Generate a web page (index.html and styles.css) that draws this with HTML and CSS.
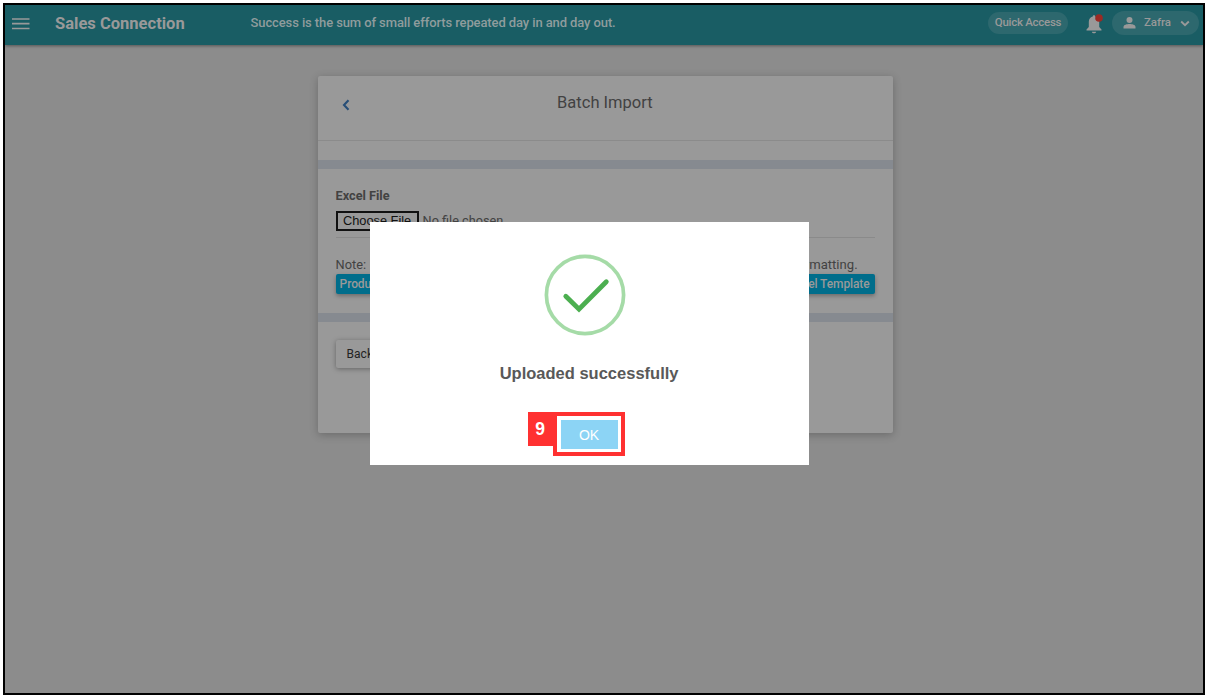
FILE: index.html
```
<!DOCTYPE html>
<html lang="en">
<head>
<meta charset="utf-8">
<title>Batch Import</title>
<link rel="stylesheet" href="styles.css">
</head>
<body>
<div class="frame">
  <header class="topbar">
    <svg class="menu" width="18" height="12" viewBox="0 0 18 12"><path d="M0 1h17.5M0 5.7h17.5M0 10.5h17.5" stroke="#999" stroke-width="1.7"/></svg>
    <div class="brand">Sales Connection</div>
    <div class="quote">Success is the sum of small efforts repeated day in and day out.</div>
    <div class="quick">Quick Access</div>
    <svg class="bell" width="18" height="20" viewBox="0 0 18 20"><path d="M8 1.2c.8 0 1.200.5 1.200 1.200 2.700.7 4 2.800 4 5.300v5.300l2.300 2.500v1H.5v-1L2.800 13V7.700c0-2.500 1.300-4.600 4-5.300C6.800 1.700 7.200 1.200 8 1.200zM5.800 17.700h4.400c-.3 1-1.200 1.500-2.200 1.500s-1.900-.5-2.200-1.500z" fill="#999"/><circle cx="13" cy="4" r="3.800" fill="#9b2a24"/></svg>
    <div class="user">
      <svg width="13" height="12" viewBox="0 0 13 12"><circle cx="6.500" cy="3" r="3" fill="#999"/><path d="M.5 11.500V10c0-2.200 3.500-3 6-3s6 .8 6 3v1.500z" fill="#999"/></svg>
      <span class="name">Zafra</span>
      <svg width="10" height="7" viewBox="0 0 10 7"><path d="M1.200 1.500L5 5.100l3.800-3.600" fill="none" stroke="#999" stroke-width="1.900"/></svg>
    </div>
  </header>
  <main class="card">
    <div class="card-head">
      <svg class="back-arrow" width="8" height="12" viewBox="0 0 8 12"><path d="M6.500 1.300L2 6l4.500 4.700" fill="none" stroke="#274e77" stroke-width="2.100"/></svg>
      <h1>Batch Import</h1>
    </div>
    <div class="gap"></div>
    <div class="band"></div>
    <section class="form">
      <label class="label">Excel File</label>
      <div class="file"><span class="choose">Choose File</span><span class="nofile">No file chosen</span></div>
      <div class="note"><span>Note:</span><span class="note-end">formatting.</span></div>
      <div class="downloads"><span class="dl">Product</span><span class="dl">Excel Template</span></div>
    </section>
    <div class="band"></div>
    <footer class="foot"><span class="back">Back</span></footer>
  </main>
</div>
<div class="modal">
  <svg class="check" width="82" height="82" viewBox="0 0 82 82"><circle cx="41" cy="41" r="38.600" fill="none" stroke="#a5dba7" stroke-width="3.700"/><path d="M21.800 42.200L35 55.200 62.300 27.700" fill="none" stroke="#4caf50" stroke-width="4.800" stroke-linecap="round"/></svg>
  <p class="message">Uploaded successfully</p>
  <div class="action"><span class="step">9</span><div class="outline"><span class="ok">OK</span></div></div>
</div>
</body>
</html>
```
FILE: styles.css
```
* { box-sizing: border-box; }
body { margin: 0; width: 1209px; height: 698px; overflow: hidden; background: #fff; padding: 3px; font-family: Roboto, sans-serif; }
.frame { width: 1202px; height: 692px; border: 2px solid #000; background: #8c8c8c; }
.topbar { height: 40px; background: #195d64; display: flex; align-items: center; padding: 0 4px 4px 7px; box-shadow: 0 1px 3px rgba(0,0,0,.4); color: #999; }
.menu { margin-top: 1px; }
.brand { margin-left: 25px; width: 195.5px; font-size: 16.55px; font-weight: 700; white-space: nowrap; }
.quote { flex: 1; font-size: 13px; letter-spacing: -.105px; line-height: 16px; white-space: nowrap; color: #8f9c9d; font-weight: 500; }
.quick { width: 80px; height: 22px; border-radius: 11px; background: #2d686e; text-align: center; font-size: 11.5px; letter-spacing: -.27px; line-height: 21px; font-weight: 500; white-space: nowrap; }
.bell { margin: 2px 8px 0 18px; }
.user { width: 87px; height: 24px; border-radius: 12px; background: #2d686e; display: flex; align-items: center; padding-left: 11px; font-size: 11.5px; letter-spacing: -.1px; font-weight: 500; }
.name { margin-left: 8px; width: 36px; line-height: 23px; height: 24px; }
.card { width: 575px; height: 357px; margin: 31px 0 0 312.6px; background: #999; border-radius: 2px; box-shadow: 0 2px 8px rgba(0,0,0,.24); color: #424242; display: flex; flex-direction: column; }
.card-head { height: 65px; border-bottom: 1px solid #8b8b8b; display: flex; align-items: flex-start; }
.back-arrow { margin: 23px 0 0 24.5px; }
h1 { margin: 17px 33px 0 0; flex: 1; text-align: center; font-size: 16.5px; line-height: 20px; font-weight: 400; }
.gap { height: 19px; }
.band { height: 9px; background: #868a90; }
.form { height: 144px; padding: 18px 18px 0; font-size: 12.8px; }
.label { display: block; font-size: 12.7px; line-height: 18px; font-weight: 700; }
.file { margin-top: 6px; height: 27px; border-bottom: 1px solid #8a8a8a; display: flex; align-items: flex-start; white-space: nowrap; }
.choose { width: 83px; height: 20px; border: 2px solid #111; font: 12.8px/16px "Liberation Sans", sans-serif; text-align: center; color: #111; }
.nofile { margin-left: 4px; font-size: 12.7px; line-height: 20px; }
.note { display: flex; justify-content: space-between; margin-top: 18px; line-height: 18px; }
.note-end { margin-right: 17px; font-size: 13.1px; }
.downloads { display: flex; justify-content: space-between; }
.dl { height: 20px; background: #006d8b; color: #999; border-radius: 2px; padding: 0 5px 0 4px; font-size: 12px; letter-spacing: -.1px; line-height: 20px; font-weight: 500; box-shadow: 0 2px 4px rgba(0,0,0,.3); }
.foot { flex: 1; padding: 18px; }
.back { display: inline-block; width: 70px; height: 28px; padding-left: 11px; line-height: 28px; font-size: 12px; border-radius: 2px; color: #222; box-shadow: 0 1px 5px rgba(0,0,0,.35); background: #999; }
/* Dialog covers the import form */
.modal { position: absolute; left: 369.6px; top: 222px; width: 439px; height: 242.5px; background: #fff; font-family: "Liberation Sans", sans-serif; display: flex; flex-direction: column; align-items: center; padding-top: 32px; }
.check { margin-right: 8px; }
.message { margin: 27px 0 0; font-size: 16.5px; line-height: 20px; font-weight: 700; color: #595959; white-space: nowrap; }
.action { display: flex; align-items: flex-start; margin: 29px 26px 0 0; }
.step { width: 25px; height: 34px; background: #ff3131; color: #fff; font-size: 17.5px; font-weight: 700; line-height: 35px; text-align: center; }
.outline { width: 72px; height: 44px; border: 4px solid #ff3131; padding: 4px 3px; }
.ok { display: block; width: 57px; height: 29px; margin-left: 1px; background: #8cd4f5; color: #fff; font-size: 14px; line-height: 30px; text-align: center; }
```
